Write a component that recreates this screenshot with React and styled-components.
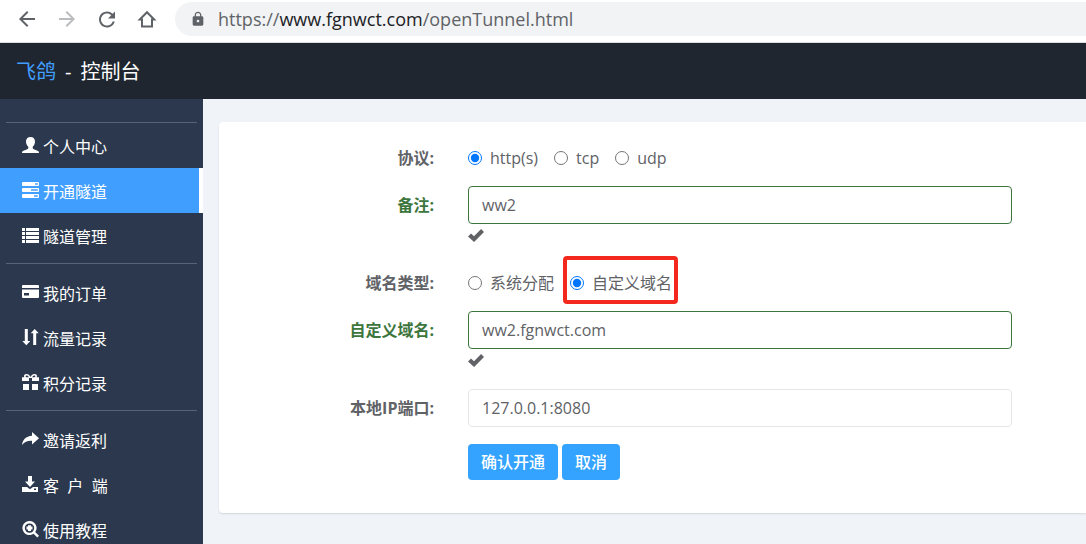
import React, { useState } from 'react';
import styled, { createGlobalStyle } from 'styled-components';
import { MdArrowBack, MdArrowForward, MdRefresh, MdLock } from 'react-icons/md';

const GlobalStyle = createGlobalStyle`
  * {
    box-sizing: border-box;
  }

  body {
    margin: 0;
    font-family: 'Open Sans', 'Noto Sans CJK SC', sans-serif;
    font-size: 16px;
    line-height: 24px;
    color: #606266;
  }
`;

const Page = styled.div`
  display: flex;
  flex-direction: column;
  height: 100vh;
  overflow: hidden;
`;

const BrowserBar = styled.div`
  display: flex;
  align-items: center;
  gap: 16px;
  padding: 2px 0 6px 15px;
  background-color: #fff;
  border-bottom: 1px solid #dadce0;
`;

const BrowserButton = styled.button`
  display: flex;
  align-items: center;
  justify-content: center;
  width: 24px;
  height: 24px;
  padding: 0;
  border: none;
  background: none;
  color: #5f6368;

  &:disabled {
    color: #babcbe;
  }
`;

const AddressBar = styled.div`
  flex: 1;
  display: flex;
  align-items: center;
  gap: 12px;
  height: 34px;
  padding-left: 15px;
  border-radius: 17px 0 0 17px;
  background-color: #f1f3f4;
  font-size: 18px;
  color: #5f6368;
`;

const Host = styled.span`
  color: #202124;
`;

const Header = styled.header`
  display: flex;
  align-items: center;
  gap: 9px;
  height: 56px;
  flex-shrink: 0;
  padding: 2px 16px 0;
  background-color: #20262f;
  color: #fff;
  font-size: 20px;
`;

const Brand = styled.a`
  color: #409eff;
  text-decoration: none;
`;

const Body = styled.div`
  flex: 1;
  display: flex;
  min-height: 0;
`;

const Sidebar = styled.nav`
  width: 203px;
  flex-shrink: 0;
  padding-top: 23px;
  overflow-y: auto;
  scrollbar-width: none;
  background-color: #2b384d;
`;

const Divider = styled.hr`
  height: 1px;
  margin: ${(props) => (props.$first ? '0 6px' : '5px 6px 6px')};
  border: none;
  background-color: #56647a;
`;

const MenuItem = styled.a`
  display: flex;
  align-items: center;
  gap: 4px;
  height: 45px;
  padding: 2px 0 0 22px;
  color: #fff;
  text-decoration: none;
  white-space: pre;
  background-color: ${(props) => (props.$active ? '#409eff' : 'transparent')};
  border-right: 4px solid ${(props) => (props.$active ? '#fff' : 'transparent')};

  svg {
    flex-shrink: 0;
    margin-bottom: 2px;
  }
`;

const Content = styled.main`
  flex: 1;
  min-width: 0;
  padding: 23px 0 0 16px;
  overflow: hidden;
  background-color: #f0f3f7;
`;

const Card = styled.form`
  padding: 17px 74px 33px 0;
  border-radius: 4px 0 0 4px;
  background-color: #fff;
  box-shadow: 0 1px 2px rgba(0, 0, 0, 0.12);
`;

const FormRow = styled.div`
  display: grid;
  grid-template-columns: 215px minmax(0, 1fr);
  column-gap: 34px;
  margin-bottom: ${(props) => (props.$tight ? '9px' : '16px')};
`;

const SubmitRow = styled.div`
  display: flex;
  gap: 4px;
  padding: 1px 0 0 249px;
`;

const FieldLabel = styled.label`
  line-height: 38px;
  text-align: right;
  font-weight: 700;
  color: ${(props) => (props.$valid ? '#3c763d' : '#606266')};
`;

const TextInput = styled.input`
  display: block;
  width: 100%;
  height: 38px;
  padding: 0 13px;
  border: 1px solid ${(props) => (props.$valid ? '#3c763d' : '#e4e7ea')};
  border-radius: 4px;
  outline: none;
  background-color: #fff;
  color: #606266;
  font: inherit;
`;

const Feedback = styled.div`
  display: flex;
  align-items: center;
  height: 24px;
  padding-bottom: 2px;
`;

const RadioGroup = styled.div`
  display: flex;
  align-items: center;
  gap: 16px;
  height: 38px;
`;

const RadioLabel = styled.label`
  position: relative;
  display: flex;
  align-items: center;
  gap: 8px;

  input {
    width: 14px;
    height: 14px;
    margin: 0;
    accent-color: #0075ff;
  }
`;

// red frame laid over the option
const Marker = styled.span`
  position: absolute;
  inset: -15px -6px -9px -7px;
  border: 4px solid #f5281e;
  border-radius: 4px;
  pointer-events: none;
`;

const Button = styled.button`
  height: 36px;
  padding: 0 13px;
  border: none;
  border-radius: 4px;
  background-color: #33a3ff;
  color: #fff;
  font: inherit;
  font-weight: 500;
  cursor: pointer;
`;

const icons = {
  user: (
    <path d="M8.500 0C5.600 0 4 1.800 4 4.600C4 6.800 4.900 8.700 6.300 9.800V11C6.300 11.600 5.900 12 5.200 12.300L1.500 13.700C.5 14.100 0 14.700 0 16H17C17 14.700 16.500 14.100 15.500 13.700L11.800 12.300C11.100 12 10.700 11.600 10.700 11V9.800C12.100 8.700 13 6.800 13 4.600C13 1.800 11.400 0 8.500 0Z" />
  ),
  tasks: (
    <path
      fillRule="evenodd"
      d="M1 0H16A1 1 0 0 1 17 1V3A1 1 0 0 1 16 4H1A1 1 0 0 1 0 3V1A1 1 0 0 1 1 0ZM13 1.200V2.800H15.800V1.200ZM1 6H16A1 1 0 0 1 17 7V9A1 1 0 0 1 16 10H1A1 1 0 0 1 0 9V7A1 1 0 0 1 1 6ZM9 7.200V8.800H15.800V7.200ZM1 12H16A1 1 0 0 1 17 13V15A1 1 0 0 1 16 16H1A1 1 0 0 1 0 15V13A1 1 0 0 1 1 12ZM12 13.200V14.800H15.800V13.200Z"
    />
  ),
  list: (
    <path d="M0 1H3V4H0ZM4 1H17V4H4ZM0 5H3V8H0ZM4 5H17V8H4ZM0 9H3V12H0ZM4 9H17V12H4ZM0 13H3V16H0ZM4 13H17V16H4Z" />
  ),
  card: (
    <path
      fillRule="evenodd"
      d="M1 1H16A1 1 0 0 1 17 2V4H0V2A1 1 0 0 1 1 1ZM0 5.500H17V13A1 1 0 0 1 16 14H1A1 1 0 0 1 0 13ZM2 9V11.500H7V9Z"
    />
  ),
  sort: (
    <path d="M2.800 0H5.800V12H8.300L4.300 16.300L.3 12H2.800ZM12.700 0L16.700 4.300H14.200V16H11.200V4.300H8.700Z" />
  ),
  gift: (
    <path
      fillRule="evenodd"
      d="M4.500 0C6.300 0 7.600 1.300 8.500 2.900C9.400 1.300 10.700 0 12.500 0C14 0 15 .8 15 2.100C15 2.500 14.900 2.800 14.700 3.200H17V7H10V4H7V7H0V3.200H2.300C2.100 2.800 2 2.500 2 2.100C2 .8 3 0 4.500 0ZM4.400 1.500C3.500 1.500 3.300 2.900 4.300 3.200H6.900C6.300 2.100 5.400 1.500 4.400 1.500ZM12.600 1.500C11.600 1.500 10.700 2.100 10.100 3.200H12.700C13.700 2.900 13.500 1.500 12.600 1.500ZM1 10H7V16H1ZM10 10H16V16H10Z"
    />
  ),
  share: (
    <path d="M10 1L17 7.200L10 13.500V9.800C5.600 9.600 2.800 10.600 0 14C.5 8.800 4 5.100 10 4.700Z" />
  ),
  download: (
    <path
      fillRule="evenodd"
      d="M6 0H10V5.500H13L8 11L3 5.500H6ZM0 11H5L8 13.200L11 11H16V16H0ZM12 12.500V14H14V12.500Z"
    />
  ),
  search: (
    <path
      fillRule="evenodd"
      d="M7.500 0A7 7 0 0 1 13.200 11.100L17 14.800L15.300 16.500L11.500 12.700A7 7 0 1 1 7.500 0ZM7.500 2.400A4.700 4.700 0 1 0 7.500 11.800A4.700 4.700 0 1 0 7.500 2.400ZM6 4.200H9V5.600H10.500V8.600H9V10H6V8.600H4.500V5.600H6Z"
    />
  ),
};

const menu = [
  [
    { icon: 'user', text: '个人中心' },
    { icon: 'tasks', text: '开通隧道', active: true },
    { icon: 'list', text: '隧道管理' },
  ],
  [
    { icon: 'card', text: '我的订单' },
    { icon: 'sort', text: '流量记录' },
    { icon: 'gift', text: '积分记录' },
  ],
  [
    { icon: 'share', text: '邀请返利' },
    { icon: 'download', text: '客  户  端' },
    { icon: 'search', text: '使用教程' },
  ],
];

const MenuIcon = ({ name }) => (
  <svg width="17" height="17" viewBox="0 0 17 17" fill="currentColor" aria-hidden="true">
    {icons[name]}
  </svg>
);

const HomeIcon = () => (
  <svg width="20" height="20" viewBox="0 0 20 20" fill="none" stroke="currentColor" strokeWidth="2" aria-hidden="true">
    <path d="M2.800 10.500L10 3.200L17.200 10.500H15V17.500H5V10.500Z" />
  </svg>
);

const OkIcon = () => (
  <svg width="16" height="13" viewBox="0 0 16 13" fill="currentColor" aria-hidden="true">
    <path d="M0 7.600L3 4.500L6 7.200L13.100 0L16 2.900L6.100 13Z" />
  </svg>
);

const Radio = ({ name, value, selected, onSelect, marked }) => (
  <RadioLabel>
    <input
      type="radio"
      name={name}
      value={value}
      checked={selected === value}
      onChange={() => onSelect(value)}
    />
    {value}
    {marked && <Marker />}
  </RadioLabel>
);

const App = () => {
  const [protocol, setProtocol] = useState('http(s)');
  const [domainType, setDomainType] = useState('自定义域名');

  return (
    <Page>
      <GlobalStyle />
      <BrowserBar>
        <BrowserButton aria-label="后退">
          <MdArrowBack size={24} />
        </BrowserButton>
        <BrowserButton aria-label="前进" disabled>
          <MdArrowForward size={24} />
        </BrowserButton>
        <BrowserButton aria-label="刷新">
          <MdRefresh size={25} />
        </BrowserButton>
        <BrowserButton aria-label="主页">
          <HomeIcon />
        </BrowserButton>
        <AddressBar>
          <MdLock size={16} />
          <span>
            https://<Host>www.fgnwct.com</Host>/openTunnel.html
          </span>
        </AddressBar>
      </BrowserBar>

      <Header>
        <Brand href="#">飞鸽</Brand>
        <span>-</span>
        <span>控制台</span>
      </Header>

      <Body>
        <Sidebar>
          {menu.map((group, index) => (
            <React.Fragment key={index}>
              <Divider $first={index === 0} />
              {group.map((item) => (
                <MenuItem key={item.icon} href="#" $active={item.active}>
                  <MenuIcon name={item.icon} />
                  {item.text}
                </MenuItem>
              ))}
            </React.Fragment>
          ))}
        </Sidebar>

        <Content>
          <Card onSubmit={(e) => e.preventDefault()}>
            <FormRow $tight>
              <FieldLabel as="span" id="protocol">协议:</FieldLabel>
              <RadioGroup role="radiogroup" aria-labelledby="protocol">
                <Radio name="protocol" value="http(s)" selected={protocol} onSelect={setProtocol} />
                <Radio name="protocol" value="tcp" selected={protocol} onSelect={setProtocol} />
                <Radio name="protocol" value="udp" selected={protocol} onSelect={setProtocol} />
              </RadioGroup>
            </FormRow>

            <FormRow>
              <FieldLabel htmlFor="remark" $valid>备注:</FieldLabel>
              <div>
                <TextInput id="remark" type="text" defaultValue="ww2" $valid />
                <Feedback>
                  <OkIcon />
                </Feedback>
              </div>
            </FormRow>

            <FormRow $tight>
              <FieldLabel as="span" id="domain-type">域名类型:</FieldLabel>
              <RadioGroup role="radiogroup" aria-labelledby="domain-type">
                <Radio name="domainType" value="系统分配" selected={domainType} onSelect={setDomainType} />
                <Radio name="domainType" value="自定义域名" selected={domainType} onSelect={setDomainType} marked />
              </RadioGroup>
            </FormRow>

            <FormRow>
              <FieldLabel htmlFor="domain" $valid>自定义域名:</FieldLabel>
              <div>
                <TextInput id="domain" type="text" defaultValue="ww2.fgnwct.com" $valid />
                <Feedback>
                  <OkIcon />
                </Feedback>
              </div>
            </FormRow>

            <FormRow>
              <FieldLabel htmlFor="address">本地IP端口:</FieldLabel>
              <TextInput id="address" type="text" defaultValue="127.0.0.1:8080" />
            </FormRow>

            <SubmitRow>
              <Button type="submit">确认开通</Button>
              <Button type="button">取消</Button>
            </SubmitRow>
          </Card>
        </Content>
      </Body>
    </Page>
  );
};

export default App;
